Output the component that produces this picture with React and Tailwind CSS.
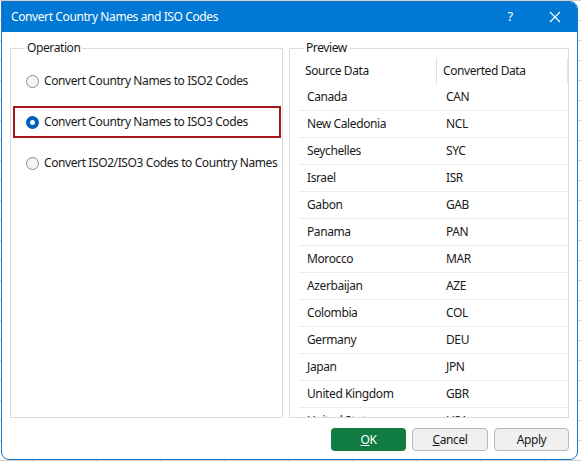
import React from "react";

const rows = [
  ["Canada", "CAN"],
  ["New Caledonia", "NCL"],
  ["Seychelles", "SYC"],
  ["Israel", "ISR"],
  ["Gabon", "GAB"],
  ["Panama", "PAN"],
  ["Morocco", "MAR"],
  ["Azerbaijan", "AZE"],
  ["Colombia", "COL"],
  ["Germany", "DEU"],
  ["Japan", "JPN"],
  ["United Kingdom", "GBR"],
  ["United States", "USA"],
];

function Radio({ checked }) {
  if (checked) {
    return (
      <span className="w-[13px] h-[13px] rounded-full bg-[#005fb8] flex items-center justify-center shrink-0">
        <span className="w-[5px] h-[5px] rounded-full bg-white" />
      </span>
    );
  }
  return <span className="w-[13px] h-[13px] rounded-full border border-[#8a8a8a] bg-[#f5f5f5] shrink-0" />;
}

function Option({ label, checked }) {
  return (
    <div
      className={
        "h-[32px] ml-[2px] mr-[1px] pl-[11px] flex items-center gap-[5px] border-2 " +
        (checked ? "border-[#a4161a]" : "border-transparent")
      }
    >
      <Radio checked={checked} />
      <span className="text-[12px] text-[#1a1a1a] leading-none whitespace-nowrap">{label}</span>
    </div>
  );
}

export default function App() {
  return (
    <div
      className="w-[581px] h-[462px] pl-[1px] pt-[1px] overflow-hidden bg-white bg-[linear-gradient(to_right,#d0d0d0_1px,transparent_1px),linear-gradient(to_bottom,#d0d0d0_1px,transparent_1px)] bg-[size:64px_20px] bg-[position:32px_0px] tracking-[-0.4px]"
      style={{ fontFamily: '"Noto Sans", "Segoe UI", sans-serif' }}
    >
      <div className="w-[577px] h-[459px] border border-[#1976c6] rounded-tr-[8px] rounded-b-[8px] overflow-hidden bg-white flex flex-col">
        <div className="h-[30px] bg-[#0078d4] text-white flex items-center shrink-0">
          <span className="pl-[9px] text-[12px] flex-1">Convert Country Names and ISO Codes</span>
          <span className="text-[13px] w-[20px] text-center mr-[29px]">?</span>
          <svg width="12" height="12" viewBox="0 0 12 12" className="mr-[16px]">
            <path d="M1 1 L11 11 M11 1 L1 11" stroke="white" strokeWidth="1.2" />
          </svg>
        </div>
        <div className="flex-1 px-[8px] pt-[8px] flex flex-col">
          <div className="flex gap-[6px] h-[378px]">
            <fieldset className="w-[273px] border border-[#dcdcdc] flex flex-col">
              <legend className="ml-[14px] px-[2px] text-[12px] leading-[16px] text-[#1a1a1a]">Operation</legend>
              <div className="mt-[9px] flex flex-col gap-[9px]">
                <Option label="Convert Country Names to ISO2 Codes" />
                <Option label="Convert Country Names to ISO3 Codes" checked />
                <Option label="Convert ISO2/ISO3 Codes to Country Names" />
              </div>
            </fieldset>
            <fieldset className="w-[280px] border border-[#dcdcdc] flex flex-col min-h-0">
              <legend className="ml-[14px] px-[2px] text-[12px] leading-[16px] text-[#1a1a1a]">Preview</legend>
              <div className="mt-[2px] ml-[9px] h-[360px] overflow-hidden text-[12px] text-[#1a1a1a]">
                <div className="h-[26px] flex items-center border-r border-[#e5e5e5]">
                  <div className="w-[138px] pl-[6px] h-full flex items-center border-r border-[#e0e0e0]">Source Data</div>
                  <div className="pl-[6px]">Converted Data</div>
                </div>
                {rows.map(([a, b]) => (
                  <div key={a} className="h-[27px] flex items-center border-b border-[#ececec]">
                    <div className="w-[138px] pl-[8px]">{a}</div>
                    <div className="pl-[9px]">{b}</div>
                  </div>
                ))}
              </div>
            </fieldset>
          </div>
          <div className="mt-[10px] flex justify-end gap-[6px]">
            <button className="w-[75px] h-[23px] rounded-[4px] bg-[#107c41] text-white text-[12px] flex items-center justify-center">
              <span><span className="underline">O</span>K</span>
            </button>
            <button className="w-[76px] h-[23px] rounded-[4px] bg-[#f0f0f0] border border-[#b8b8b8] text-[#1a1a1a] text-[12px] flex items-center justify-center">
              <span><span className="underline">C</span>ancel</span>
            </button>
            <button className="w-[75px] h-[23px] rounded-[4px] bg-[#f0f0f0] border border-[#b8b8b8] text-[#1a1a1a] text-[12px] flex items-center justify-center">
              Apply
            </button>
          </div>
        </div>
      </div>
    </div>
  );
}
